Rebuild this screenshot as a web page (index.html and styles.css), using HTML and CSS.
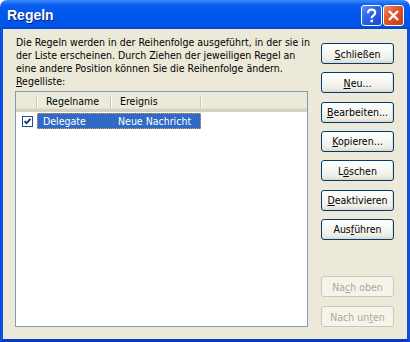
FILE: index.html
```html
<!DOCTYPE html>
<html lang="de">
<head>
    <meta charset="UTF-8">
    <title>Regeln</title>
    <link rel="stylesheet" href="styles.css">
</head>
<body>
    <div class="window">
        <div class="titlebar">
            <span class="title">Regeln</span>
            <div class="caption-buttons">
                <span class="cap-btn help">
                    <svg width="19" height="19" viewBox="0 0 19 19">
                        <path d="M6 7.2 C6 4.6 7.6 3.6 9.6 3.6 C11.8 3.6 13.2 4.9 13.2 6.8 C13.2 8.6 11.9 9.3 10.9 9.9 C10 10.4 9.7 10.9 9.7 12.2" fill="none" stroke="#fff" stroke-width="2.2"/>
                        <rect x="8.5" y="13.8" width="2.4" height="2.4" fill="#fff"/>
                    </svg>
                </span>
                <span class="cap-btn close">
                    <svg width="19" height="19" viewBox="0 0 19 19">
                        <path d="M5 5 L14 14 M14 5 L5 14" stroke="#fff" stroke-width="2.4"/>
                    </svg>
                </span>
            </div>
        </div>

        <div class="client">
            <div class="left-pane">
                <p class="intro">Die Regeln werden in der Reihenfolge ausgeführt, in der sie in<br>der Liste erscheinen. Durch Ziehen der jeweiligen Regel an<br>eine andere Position können Sie die Reihenfolge ändern.</p>
                <div class="list-label"><u>R</u>egelliste:</div>

                <div class="listview">
                    <div class="lv-header">
                        <div class="hcol hcol-check"></div>
                        <div class="hcol hcol-name">Regelname</div>
                        <div class="hcol hcol-event">Ereignis</div>
                        <div class="hcol hcol-rest"></div>
                    </div>
                    <div class="lv-row">
                        <span class="check-cell">
                            <span class="checkbox">
                                <svg width="9" height="9" viewBox="0 0 9 9">
                                    <path d="M1.5 4 L3.5 6.2 L7.5 1.8" fill="none" stroke="#1c2f6e" stroke-width="1.8"/>
                                </svg>
                            </span>
                        </span>
                        <span class="row-selected">
                            <span class="cell-name">Delegate</span>
                            <span class="cell-event">Neue Nachricht</span>
                        </span>
                    </div>
                </div>
            </div>

            <div class="button-column">
                <div class="button-group">
                    <button class="btn"><u>S</u>chließen</button>
                    <button class="btn"><u>N</u>eu...</button>
                    <button class="btn"><u>B</u>earbeiten...</button>
                    <button class="btn"><u>K</u>opieren...</button>
                    <button class="btn">L<u>ö</u>schen</button>
                    <button class="btn"><u>D</u>eaktivieren</button>
                    <button class="btn">Aus<u>f</u>ühren</button>
                </div>
                <div class="button-group bottom">
                    <button class="btn" disabled>Na<u>c</u>h oben</button>
                    <button class="btn" disabled>Nach un<u>t</u>en</button>
                </div>
            </div>
        </div>
    </div>
</body>
</html>
```

FILE: styles.css
```css
body {
    margin: 0;
    padding: 0;
    background: #ffffff;
    font-family: "DejaVu Sans Condensed", "DejaVu Sans", sans-serif;
    font-size: 10.5px;
    color: #000;
}
.window {
    width: 410px;
    height: 342px;
    display: flex;
    flex-direction: column;
    box-sizing: border-box;
}

/* Title bar */
.titlebar {
    height: 29px;
    flex: none;
    display: flex;
    align-items: center;
    justify-content: space-between;
    padding: 0 6px 0 6px;
    border-radius: 7px 7px 0 0;
    background: linear-gradient(to bottom, #3c8cf8 0px, #2a7af5 2px, #0b5ff0 5px, #0058ee 12px, #0057ea 20px, #0054e3 26px, #0046d0 29px);
}
.title {
    color: #fff;
    font-family: "Liberation Sans", Arial, sans-serif;
    font-weight: bold;
    font-size: 14px;
    padding-left: 1px;
    text-shadow: 1px 1px 0 #0a1e8c;
}
.caption-buttons {
    display: flex;
    gap: 1px;
    margin-top: 1px;
}
.cap-btn {
    width: 19px;
    height: 19px;
    border: 1px solid #fff;
    border-radius: 3px;
    display: flex;
}
.cap-btn.help {
    background: linear-gradient(135deg, #5b8ff5 0%, #2a64e6 45%, #1748d8 100%);
}
.cap-btn.close {
    background: linear-gradient(135deg, #ee8b6c 0%, #e2572a 40%, #c8391a 100%);
}

/* Client area */
.client {
    flex: 1;
    display: flex;
    gap: 13px;
    background: #ece9d8;
    border: 3px solid #0a50e2;
    border-top: none;
    border-bottom-color: #0838c8;
    padding: 7px 13px 12px 12px;
}
.left-pane {
    width: 293px;
    display: flex;
    flex-direction: column;
}
.intro {
    margin: 0 0 0 1px;
    line-height: 13px;
    white-space: nowrap;
}
.list-label {
    margin-left: 1px;
    line-height: 13px;
    margin-bottom: 3px;
}

/* List view */
.listview {
    flex: 1;
    background: #fff;
    border: 1px solid #7f9db9;
}
.lv-header {
    display: flex;
    height: 17px;
    background: #ebeadb;
    border-bottom: 3px solid #d6d2c2;
    box-shadow: inset 0 -1px 0 #e2decd;
}
.hcol {
    position: relative;
    display: flex;
    align-items: center;
    padding-left: 9px;
    box-sizing: border-box;
}
.hcol::after {
    content: "";
    position: absolute;
    right: 0;
    top: 4px;
    bottom: 1px;
    width: 1px;
    background: #c7c5b2;
    box-shadow: 1px 0 0 #fff;
}
.hcol-check { width: 21px; padding: 0; }
.hcol-name { width: 74px; }
.hcol-event { width: 90px; }
.hcol-rest { flex: 1; }
.hcol-rest::after { display: none; }

.lv-row {
    display: flex;
    height: 16px;
    margin-top: 1px;
}
.check-cell {
    width: 21px;
    display: flex;
    align-items: center;
    padding-left: 6px;
    box-sizing: border-box;
}
.checkbox {
    width: 9px;
    height: 9px;
    border: 1px solid #1c5180;
    background: #fff;
    display: flex;
}
.row-selected {
    width: 164px;
    display: flex;
    align-items: center;
    background: #316ac5;
    color: #fff;
    outline: 1px dotted #d9a24a;
    outline-offset: -1px;
    padding-left: 6px;
    box-sizing: border-box;
}
.cell-name { width: 75px; }

/* Buttons */
.button-column {
    width: 73px;
    display: flex;
    flex-direction: column;
    justify-content: space-between;
    padding-top: 7px;
}
.button-group {
    display: flex;
    flex-direction: column;
    gap: 8.33px;
}
.button-group.bottom {
    gap: 9px;
}
.btn {
    width: 73px;
    height: 21px;
    padding: 0;
    font-family: inherit;
    font-size: 10.5px;
    color: #000;
    border: 1px solid #003c74;
    border-radius: 3px;
    background: linear-gradient(to bottom, #ffffff 0%, #f7f7f4 40%, #efeee7 80%, #dcd8cb 100%);
    box-shadow: inset -1px 0 0 #e3e0d6;
}
.btn:disabled {
    color: #aca899;
    border-color: #c9c7ba;
    background: #f5f4ea;
    box-shadow: none;
}
```
